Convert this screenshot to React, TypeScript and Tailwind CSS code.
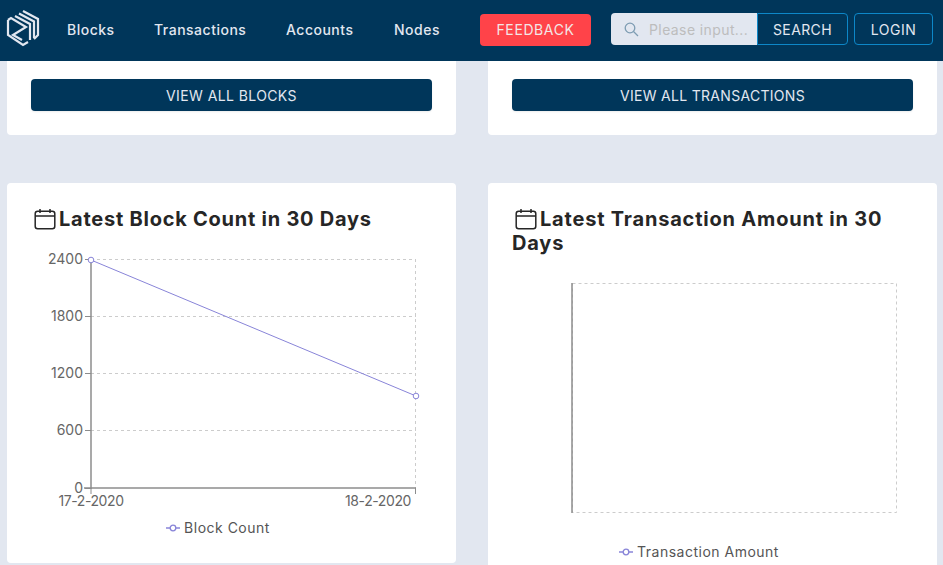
const font = 'font-["Inter","Liberation_Sans",sans-serif]'

function Logo() {
  return (
    <svg width="34" height="38" viewBox="0 0 34 38" fill="none" stroke="#e2e7f0" strokeWidth="2.2">
      <path d="M2 10 V25 L17 35 L22 32" />
      <path d="M2 10 L5 8 L20 17 L7 25 L16 30" />
      <path d="M9 6 L24 14 V30" />
      <path d="M13 3.5 L28 11.5 V28" />
      <path d="M17 1 L32 9 V25 L28 29" />
    </svg>
  )
}

function CalendarIcon() {
  return (
    <svg width="22" height="22" viewBox="0 0 22 22" fill="none" stroke="#262626" strokeWidth="1.5" className="shrink-0">
      <rect x="1.2" y="3.2" width="19.6" height="17.6" rx="2.5" />
      <path d="M1.2 8 H20.8 M6 1 V5 M16 1 V5" />
    </svg>
  )
}

function BlockChart() {
  const ticks = [
    { y: 259, label: '2400' },
    { y: 316, label: '1800' },
    { y: 373, label: '1200' },
    { y: 430, label: '600' },
    { y: 488, label: '0' },
  ]
  return (
    <svg width="449" height="268" viewBox="7 245 449 268" className="block" fontFamily="Inter, sans-serif">
      {ticks.slice(0, 4).map((t) => (
        <line key={t.y} x1="91" x2="416" y1={t.y + 0.5} y2={t.y + 0.5} stroke="#ccc" strokeDasharray="3 3" />
      ))}
      <line x1="415.5" x2="415.5" y1="259" y2="488" stroke="#ccc" strokeDasharray="3 3" />
      <line x1="91" x2="91" y1="259" y2="489" stroke="#8c8c8c" strokeWidth="1.5" />
      <line x1="84" x2="416" y1="488" y2="488" stroke="#8c8c8c" strokeWidth="1.5" />
      <line x1="415.5" x2="415.5" y1="488" y2="494" stroke="#8c8c8c" />
      <line x1="91" x2="91" y1="488" y2="494" stroke="#8c8c8c" />
      {ticks.map((t) => (
        <g key={t.label}>
          <line x1="85" x2="91" y1={t.y + 0.5} y2={t.y + 0.5} stroke="#8c8c8c" />
          <text x="83" y={t.y + 5} textAnchor="end" fontSize="14" fill="#666">{t.label}</text>
        </g>
      ))}
      <text x="91" y="506" textAnchor="middle" fontSize="14" letterSpacing="-0.4" fill="#666">17-2-2020</text>
      <text x="411" y="506" textAnchor="end" fontSize="14" letterSpacing="-0.4" fill="#666">18-2-2020</text>
      <line x1="91" y1="260" x2="416" y2="396" stroke="#8884d8" />
      <circle cx="91" cy="260" r="2.8" fill="#fff" stroke="#8884d8" />
      <circle cx="416" cy="396" r="2.8" fill="#fff" stroke="#8884d8" />
    </svg>
  )
}

function AmountChart() {
  return (
    <svg width="449" height="245" viewBox="488 275 449 245" className="block">
      <rect x="572.5" y="283.5" width="324" height="229" fill="none" stroke="#ccc" strokeDasharray="3 3" />
      <line x1="572" x2="572" y1="283" y2="513" stroke="#8c8c8c" strokeWidth="1.5" />
    </svg>
  )
}

function Legend({ label }: { label: string }) {
  return (
    <div className="flex items-center justify-center gap-1 pr-[27px] text-[14px] leading-5 text-[#555] tracking-[0.5px]">
      <svg width="14" height="10" viewBox="0 0 14 10">
        <line x1="0" x2="14" y1="5" y2="5" stroke="#8884d8" strokeWidth="1.5" />
        <circle cx="7" cy="5" r="2.8" fill="#fff" stroke="#8884d8" strokeWidth="1.3" />
      </svg>
      <span>{label}</span>
    </div>
  )
}

export default function App() {
  return (
    <div className={`${font} h-[565px] w-[943px] overflow-hidden bg-[#e2e7f0]`}>
      <header className="flex h-[61px] items-center bg-[#00365a] pb-[3px] pl-[6px]">
        <Logo />
        <nav className="ml-[27px] flex gap-10 text-[14px] font-medium text-[#e2e7f0] tracking-[0.5px]">
          <span className="w-[47px] whitespace-nowrap">Blocks</span>
          <span className="w-[92px] whitespace-nowrap">Transactions</span>
          <span className="w-[68px] whitespace-nowrap">Accounts</span>
          <span className="w-[46px] whitespace-nowrap">Nodes</span>
        </nav>
        <button className="ml-10 mt-[2px] h-8 w-[111px] rounded bg-[#ff4349] pb-[2px] text-[14px] tracking-[0.6px] text-[#f3e6e6]">FEEDBACK</button>
        <div className="ml-5 flex h-8 w-[146px] items-center gap-[10px] rounded-l bg-[#e2e7f0] pl-[13px] text-[14px] tracking-[0.4px] text-[#bdbdbd]">
          <svg width="15" height="15" viewBox="0 0 15 15" fill="none" stroke="#7d9cb2" strokeWidth="1.3">
            <circle cx="6" cy="6" r="4.8" />
            <path d="M9.5 9.5 L14 14" />
          </svg>
          <span className="whitespace-nowrap">Please input...</span>
        </div>
        <button className="h-8 w-[91px] rounded-r border border-[#0d87c8] text-[14px] tracking-[0.4px] text-[#e2e7f0]">SEARCH</button>
        <button className="ml-[6px] h-8 w-[79px] rounded border border-[#0d87c8] text-[14px] tracking-[0.5px] text-[#e2e7f0]">LOGIN</button>
      </header>

      <main className="grid grid-cols-[449px_449px] gap-x-8 gap-y-12 pl-[7px]">
        <section className="rounded-b bg-white px-6 pb-6 pt-[18px]">
          <button className="h-8 w-full rounded bg-[#00365a] text-[14px] tracking-[0.4px] text-[#e2e7f0] shadow-[0_1px_2px_rgba(0,0,0,0.08)]">VIEW ALL BLOCKS</button>
        </section>
        <section className="rounded-b bg-white px-6 pb-6 pt-[18px]">
          <button className="h-8 w-full rounded bg-[#00365a] text-[14px] tracking-[0.3px] text-[#e2e7f0] shadow-[0_1px_2px_rgba(0,0,0,0.08)]">VIEW ALL TRANSACTIONS</button>
        </section>

        <section className="h-[380px] rounded bg-white pt-6">
          <h2 className="flex items-center gap-[3px] pl-[27px] text-[20px] font-bold leading-6 tracking-[0.75px] text-[#262626]">
            <CalendarIcon />
            Latest Block Count in 30 Days
          </h2>
          <div className="mt-[14px]">
            <BlockChart />
          </div>
          <div className="mt-[5px]">
            <Legend label="Block Count" />
          </div>
        </section>

        <section className="h-[420px] rounded bg-white pt-6">
          <h2 className="px-6 text-[20px] font-bold leading-6 tracking-[0.8px] text-[#262626]">
            <span className="ml-[3px] inline-flex items-center gap-[3px] align-bottom whitespace-nowrap">
              <CalendarIcon />
              Latest Transaction Amount in 30
            </span>
            <br />
            Days
          </h2>
          <div className="mt-[20px]">
            <AmountChart />
          </div>
          <div className="mt-[22px]">
            <Legend label="Transaction Amount" />
          </div>
        </section>
      </main>
    </div>
  )
}
